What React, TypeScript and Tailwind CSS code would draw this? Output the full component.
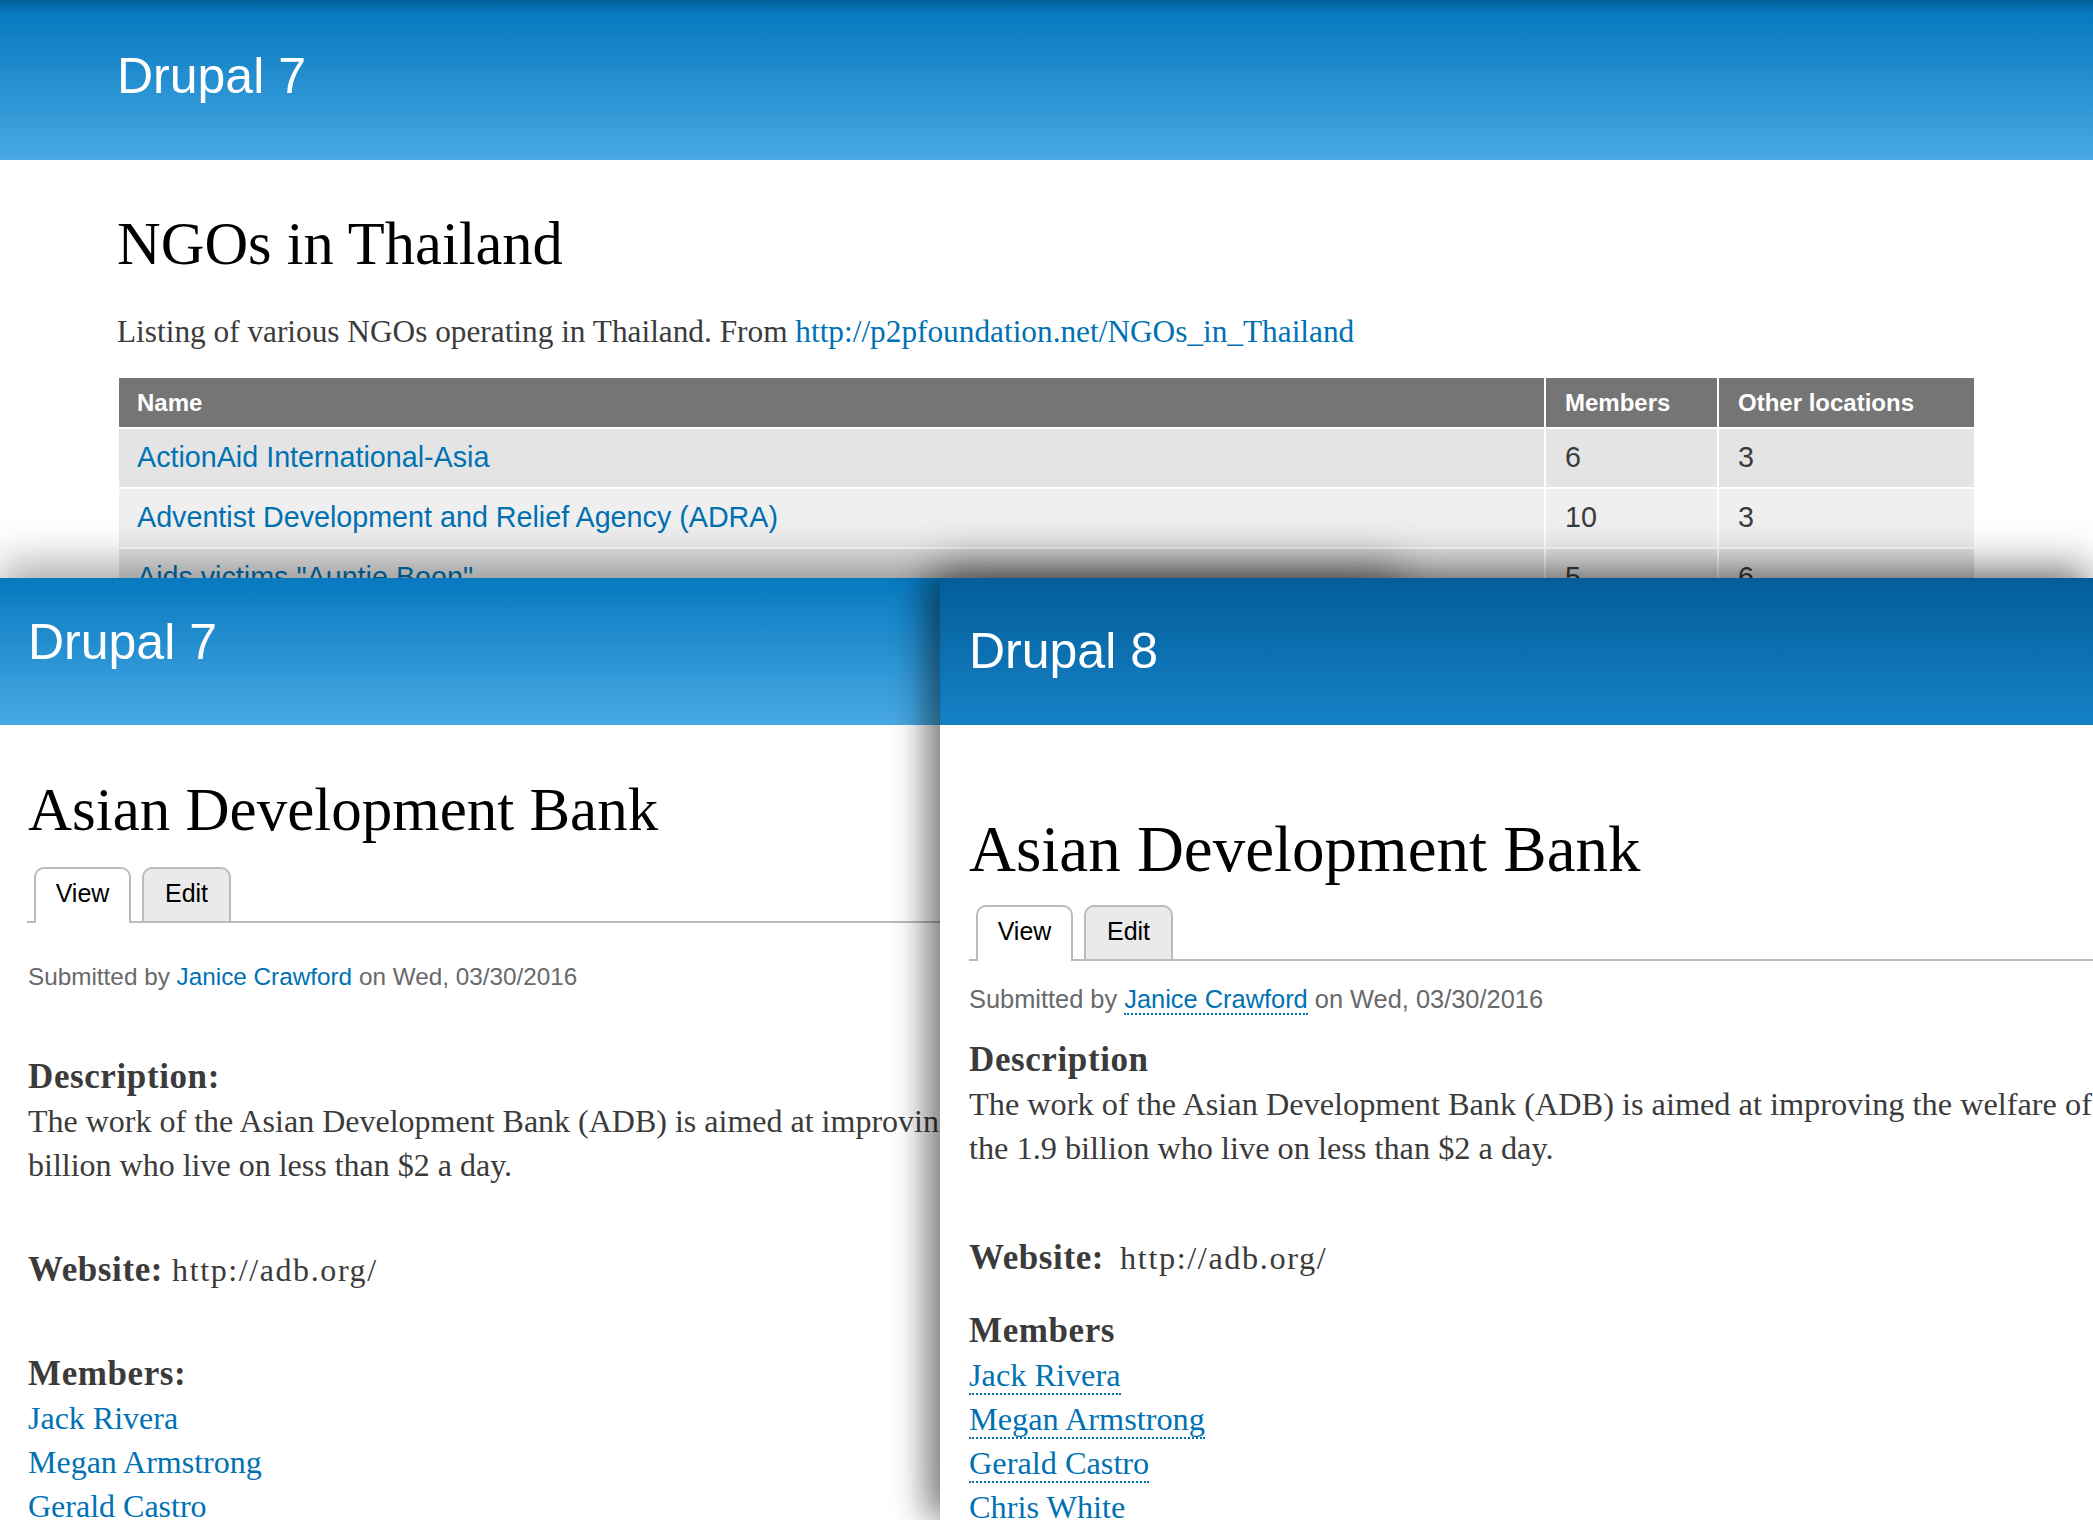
import React from "react";

const serif = "font-['Liberation_Serif',Georgia,serif]";
const sans = "font-['Liberation_Sans',Helvetica,Arial,sans-serif]";

const rows = [
  { name: "ActionAid International-Asia", members: "6", other: "3", bg: "bg-[#e4e4e4]" },
  { name: "Adventist Development and Relief Agency (ADRA)", members: "10", other: "3", bg: "bg-[#efefef]" },
  { name: 'Aids victims "Auntie Boon"', members: "5", other: "6", bg: "bg-[#e4e4e4]" },
];

const members = ["Jack Rivera", "Megan Armstrong", "Gerald Castro", "Chris White"];

function Tabs({ className }: { className: string }) {
  return (
    <div className={`flex items-end gap-[11px] border-b-2 border-[#bbbbbb] pl-[7px] ${className}`}>
      <div className={`${sans} -mb-[2px] flex h-[56px] w-[97px] items-center justify-center rounded-t-[10px] border-2 border-b-0 border-[#bbbbbb] bg-white pb-[5px] text-[25px] text-black`}>
        View
      </div>
      <div className={`${sans} flex h-[54px] w-[89px] items-center justify-center rounded-t-[10px] border-2 border-b-0 border-[#bbbbbb] bg-[#eaeaea] pb-[3px] text-[25px] text-black`}>
        Edit
      </div>
    </div>
  );
}

function TopWindow() {
  return (
    <div className="absolute left-0 top-0 h-[640px] w-[2093px] overflow-hidden bg-white">
      <div className="h-[160px] bg-[linear-gradient(to_bottom,#05609c_0px,#0779bf_14px,#48a9e4_100%)] pl-[117px] pt-[51px]">
        <div className={`${sans} text-[50px] leading-none text-white`}>Drupal 7</div>
      </div>
      <div className="pl-[117px]">
        <h1 className={`${serif} mt-[48px] text-[60.5px] leading-[72px] text-black`}>NGOs in Thailand</h1>
        <p className={`${serif} mt-[32px] text-[31.3px] leading-[40px] text-[#3b3b3b]`}>
          Listing of various NGOs operating in Thailand. From{" "}
          <span className="text-[#0071b3]">http://p2pfoundation.net/NGOs_in_Thailand</span>
        </p>
        <div className={`${sans} ml-[2px] mt-[26px] w-[1855px]`}>
          <div className="grid h-[49px] grid-cols-[1425px_171px_255px] gap-x-[2px]">
            <div className="flex items-center bg-[#757575] pl-[18px] text-[24px] font-bold text-white">Name</div>
            <div className="flex items-center bg-[#757575] pl-[19px] text-[24px] font-bold text-white">Members</div>
            <div className="flex items-center bg-[#757575] pl-[19px] text-[24px] font-bold text-white">Other locations</div>
          </div>
          {rows.map((r) => (
            <div key={r.name} className="mt-[2px] grid h-[58px] grid-cols-[1425px_171px_255px] gap-x-[2px]">
              <div className={`flex items-center ${r.bg} pl-[18px] text-[28.7px] text-[#0071b3]`}>{r.name}</div>
              <div className={`flex items-center ${r.bg} pl-[19px] text-[28.7px] text-[#3b3b3b]`}>{r.members}</div>
              <div className={`flex items-center ${r.bg} pl-[19px] text-[28.7px] text-[#3b3b3b]`}>{r.other}</div>
            </div>
          ))}
        </div>
      </div>
    </div>
  );
}

function LeftWindow() {
  return (
    <div className="absolute left-0 top-[578px] z-10 h-[942px] w-[1400px] overflow-hidden bg-white shadow-[0_-14px_40px_rgba(0,0,0,0.35)]">
      <div className="h-[147px] bg-[linear-gradient(to_bottom,#0779bf,#48a9e4)] pl-[28px] pt-[39px]">
        <div className={`${sans} text-[50px] leading-none text-white`}>Drupal 7</div>
      </div>
      <div className="w-[1290px]">
        <h1 className={`${serif} ml-[28px] mt-[49px] text-[61px] leading-[72px] text-black`}>Asian Development Bank</h1>
        <Tabs className="ml-[27px] mt-[21px]" />
        <div className={`${sans} ml-[28px] mt-[38px] text-[24.3px] leading-[32px] text-[#68696b]`}>
          Submitted by <span className="text-[#0071b3]">Janice Crawford</span> on Wed, 03/30/2016
        </div>
        <div className={`${serif} ml-[28px] mt-[62px] text-[32px] leading-[44px] text-[#3b3b3b]`}>
          <div className="text-[35px] font-bold tracking-[0.6px]">Description:</div>
          <p>
            The work of the Asian Development Bank (ADB) is aimed at improving the welfare of the 1.9 billion who
            live on less than $2 a day.
          </p>
          <div className="mt-[61px] flex gap-[9px]">
            <span className="text-[35px] font-bold tracking-[0.6px]">Website:</span>
            <span className="tracking-[1.6px]">http://adb.org/</span>
          </div>
          <div className="mt-[60px] text-[35px] font-bold tracking-[0.6px]">Members:</div>
          {members.map((m) => (
            <div key={m} className="text-[#0071b3]">{m}</div>
          ))}
        </div>
      </div>
    </div>
  );
}

function RightWindow() {
  return (
    <div className="absolute left-[940px] top-[578px] z-20 h-[942px] w-[1153px] overflow-hidden bg-white shadow-[0_-14px_40px_rgba(0,0,0,0.35),-16px_0_30px_rgba(0,0,0,0.35)]">
      <div className="h-[147px] bg-[linear-gradient(to_bottom,#035d9a,#1582c6)] pl-[29px] pt-[48px]">
        <div className={`${sans} text-[50px] leading-none text-white`}>Drupal 8</div>
      </div>
      <div className="w-[1160px]">
        <h1 className={`${serif} ml-[29px] mt-[85px] text-[65px] leading-[78px] text-black`}>Asian Development Bank</h1>
        <Tabs className="ml-[29px] mt-[17px]" />
        <div className={`${sans} ml-[29px] mt-[22px] text-[25.4px] leading-[32px] text-[#68696b]`}>
          Submitted by{" "}
          <span className="border-b-2 border-dotted border-[#0071b3] text-[#0071b3]">Janice Crawford</span> on Wed,
          03/30/2016
        </div>
        <div className={`${serif} ml-[29px] mt-[23px] text-[32.3px] leading-[44px] text-[#3b3b3b]`}>
          <div className="text-[35px] font-bold tracking-[0.6px]">Description</div>
          <p>
            The work of the Asian Development Bank (ADB) is aimed at improving the welfare of the 1.9 billion who
            live on less than $2 a day.
          </p>
          <div className="mt-[66px] flex gap-[16px]">
            <span className="text-[35px] font-bold tracking-[0.6px]">Website:</span>
            <span className="tracking-[1.6px]">http://adb.org/</span>
          </div>
          <div className="mt-[29px] text-[35px] font-bold tracking-[0.6px]">Members</div>
          {members.map((m) => (
            <div key={m}>
              <span className="border-b-2 border-dotted border-[#0071b3] text-[#0071b3]">{m}</span>
            </div>
          ))}
        </div>
      </div>
    </div>
  );
}

export default function App() {
  return (
    <div className="relative h-[1520px] w-[2093px] overflow-hidden bg-white">
      <TopWindow />
      <LeftWindow />
      <RightWindow />
    </div>
  );
}
